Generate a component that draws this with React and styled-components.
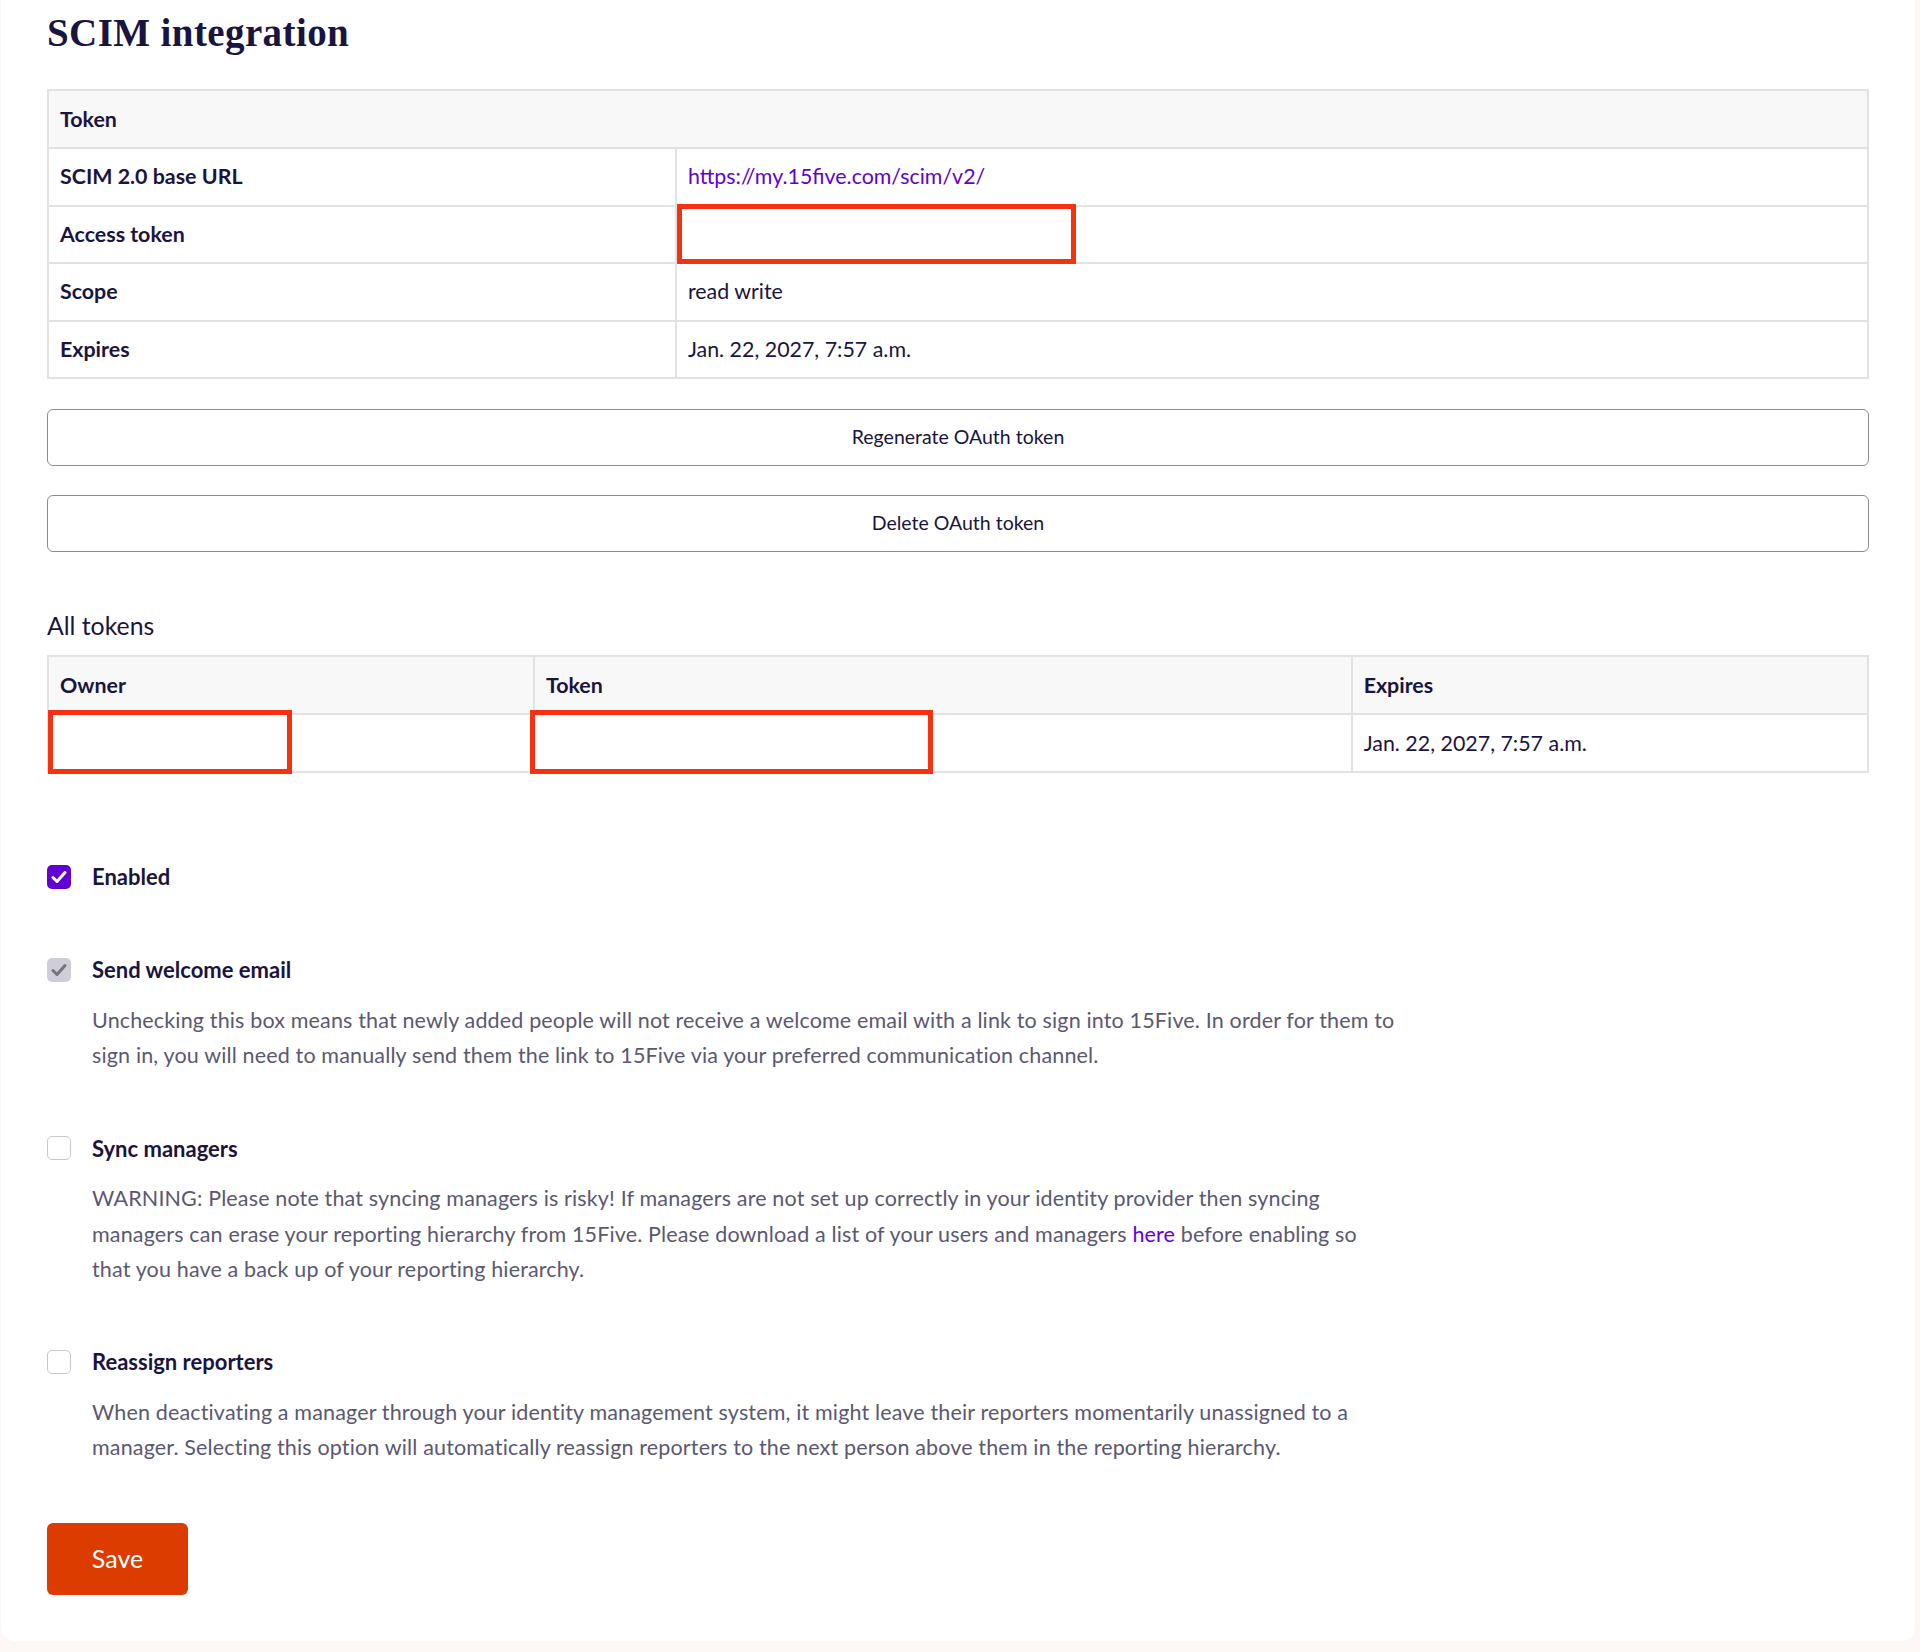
import styled, { createGlobalStyle } from 'styled-components';

const GlobalStyle = createGlobalStyle`
  html, body {
    margin: 0;
    padding: 0;
    background-color: #fdf8f6;
  }
  * {
    box-sizing: border-box;
  }
`;

const Card = styled.div`
  margin: 0 5px 11px 1px;
  padding: 0 46px 46px 46px;
  height: 1641px;
  background-color: #ffffff;
  border-radius: 0 0 14px 14px;
  font-family: 'Lato', 'Liberation Sans', sans-serif;
  color: #1a1440;
`;

const Title = styled.h1`
  margin: 0 0 25px;
  height: 64px;
  font-family: 'Liberation Serif', serif;
  font-size: 39px;
  line-height: 66px;
  letter-spacing: 0.4px;
  font-weight: 700;
  color: #1a1440;
`;

const Table = styled.table`
  width: 100%;
  border-collapse: collapse;
  table-layout: fixed;
  font-size: 21.4px;
`;

const HeadCell = styled.th`
  height: 58px;
  padding: 0 11px;
  text-align: left;
  font-weight: 700;
  background-color: #f8f8f8;
  border: 2px solid #e2e2e2;
  position: relative;
`;

const LabelCell = styled.td`
  height: 57.6px;
  padding: 0 11px 1px;
  font-weight: 700;
  border: 2px solid #e2e2e2;
`;

const Cell = styled.td`
  height: 57.6px;
  padding: 0 11px 1px;
  border: 2px solid #e2e2e2;
  position: relative;
`;

const Link = styled.a`
  color: #6200d4;
  text-decoration: none;
`;

const Redaction = styled.div`
  position: absolute;
  top: ${(props) => props.$top}px;
  left: ${(props) => props.$left}px;
  width: ${(props) => props.$width}px;
  height: ${(props) => props.$height}px;
  border: 5px solid #f5320f;
`;

const OutlineButton = styled.button`
  display: block;
  width: 100%;
  height: 57px;
  margin-top: 29.5px;
  padding-bottom: 3px;
  background-color: #ffffff;
  border: 1.5px solid #8b8a96;
  border-radius: 6px;
  font-family: inherit;
  font-size: 19.5px;
  color: #1a1440;
`;

const SubTitle = styled.h3`
  margin: 59px 0 14px;
  font-size: 24.8px;
  line-height: 30px;
  font-weight: 400;
  color: #1a1440;
`;

const Options = styled.div`
  margin-top: 92px;
  display: flex;
  flex-direction: column;
`;

const Option = styled.div`
  margin-bottom: ${(props) => props.$gap}px;
`;

const OptionHead = styled.div`
  display: flex;
  align-items: center;
  gap: 21px;
  height: 24px;
`;

const Box = styled.span`
  width: 24px;
  height: 24px;
  flex-shrink: 0;
  display: flex;
  align-items: center;
  justify-content: center;
  border-radius: 5px;
  background-color: ${(props) => props.$bg || '#ffffff'};
  border: ${(props) => (props.$bg ? 'none' : '1.5px solid #c9c8d2')};
`;

const OptionLabel = styled.label`
  font-size: 22px;
  font-weight: 700;
`;

const Description = styled.p`
  margin: 21px 0 0 45px;
  max-width: 1307px;
  font-size: 21.5px;
  line-height: 35.2px;
  letter-spacing: 0.15px;
  color: #5b5872;
`;

const SaveButton = styled.button`
  display: block;
  width: 141px;
  height: 72px;
  margin-top: 58px;
  padding-bottom: 3px;
  background-color: #dd3c00;
  border: none;
  border-radius: 6px;
  font-family: inherit;
  font-size: 25px;
  color: #ffffff;
`;

const Check = ({ color }) => (
  <svg width="16" height="14" viewBox="0 0 16 14" fill="none">
    <path
      d="M2 7.5L6 11.5L14 2.5"
      stroke={color}
      strokeWidth="3"
      strokeLinecap="round"
      strokeLinejoin="round"
    />
  </svg>
);

const App = () => {
  return (
    <>
      <GlobalStyle />
      <Card>
        <Title>SCIM integration</Title>

        <Table>
          <colgroup>
            <col style={{ width: '34.5%' }} />
            <col />
          </colgroup>
          <thead>
            <tr>
              <HeadCell colSpan={2}>Token</HeadCell>
            </tr>
          </thead>
          <tbody>
            <tr>
              <LabelCell>SCIM 2.0 base URL</LabelCell>
              <Cell>
                <Link href="#">https://my.15five.com/scim/v2/</Link>
              </Cell>
            </tr>
            <tr>
              <LabelCell>Access token</LabelCell>
              <Cell>
                <Redaction $top={-3} $left={0} $width={399} $height={60} />
              </Cell>
            </tr>
            <tr>
              <LabelCell>Scope</LabelCell>
              <Cell>read write</Cell>
            </tr>
            <tr>
              <LabelCell>Expires</LabelCell>
              <Cell>Jan. 22, 2027, 7:57 a.m.</Cell>
            </tr>
          </tbody>
        </Table>

        <OutlineButton>Regenerate OAuth token</OutlineButton>
        <OutlineButton>Delete OAuth token</OutlineButton>

        <SubTitle>All tokens</SubTitle>
        <Table>
          <colgroup>
            <col style={{ width: '26.7%' }} />
            <col style={{ width: '44.93%' }} />
            <col />
          </colgroup>
          <thead>
            <tr>
              <HeadCell>Owner</HeadCell>
              <HeadCell>Token</HeadCell>
              <HeadCell>Expires</HeadCell>
            </tr>
          </thead>
          <tbody>
            <tr>
              <Cell>
                <Redaction $top={-5} $left={-1} $width={244} $height={64} />
              </Cell>
              <Cell>
                <Redaction $top={-5} $left={-5} $width={403} $height={64} />
              </Cell>
              <Cell>Jan. 22, 2027, 7:57 a.m.</Cell>
            </tr>
          </tbody>
        </Table>

        <Options>
          <Option $gap={69}>
            <OptionHead>
              <Box $bg="#6200d4">
                <Check color="#ffffff" />
              </Box>
              <OptionLabel>Enabled</OptionLabel>
            </OptionHead>
          </Option>

          <Option $gap={63}>
            <OptionHead>
              <Box $bg="#cfced8">
                <Check color="#76757f" />
              </Box>
              <OptionLabel>Send welcome email</OptionLabel>
            </OptionHead>
            <Description>
              Unchecking this box means that newly added people will not receive a welcome email
              with a link to sign into 15Five. In order for them to sign in, you will need to
              manually send them the link to 15Five via your preferred communication channel.
            </Description>
          </Option>

          <Option $gap={63}>
            <OptionHead>
              <Box />
              <OptionLabel>Sync managers</OptionLabel>
            </OptionHead>
            <Description>
              WARNING: Please note that syncing managers is risky! If managers are not set up
              correctly in your identity provider then syncing managers can erase your reporting
              hierarchy from 15Five. Please download a list of your users and managers{' '}
              <Link href="#">here</Link> before enabling so that you have a back up of your
              reporting hierarchy.
            </Description>
          </Option>

          <Option $gap={0}>
            <OptionHead>
              <Box />
              <OptionLabel>Reassign reporters</OptionLabel>
            </OptionHead>
            <Description>
              When deactivating a manager through your identity management system, it might leave
              their reporters momentarily unassigned to a manager. Selecting this option will
              automatically reassign reporters to the next person above them in the reporting
              hierarchy.
            </Description>
          </Option>
        </Options>

        <SaveButton>Save</SaveButton>
      </Card>
    </>
  );
};

export default App;
